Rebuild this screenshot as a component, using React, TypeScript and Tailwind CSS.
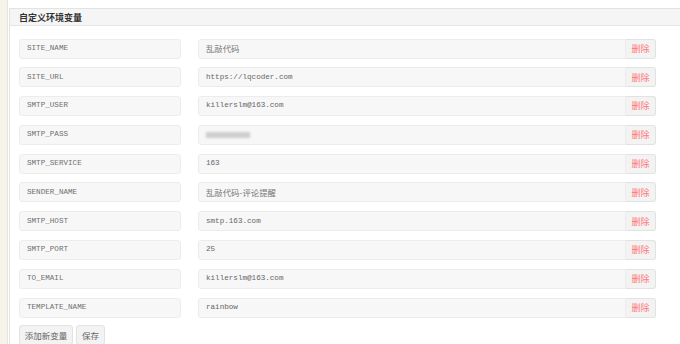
import React from "react";

const rows: [string, string][] = [
  ["SITE_NAME", "乱敲代码"],
  ["SITE_URL", "https://lqcoder.com"],
  ["SMTP_USER", "killerslm@163.com"],
  ["SMTP_PASS", ""],
  ["SMTP_SERVICE", "163"],
  ["SENDER_NAME", "乱敲代码-评论提醒"],
  ["SMTP_HOST", "smtp.163.com"],
  ["SMTP_PORT", "25"],
  ["TO_EMAIL", "killerslm@163.com"],
  ["TEMPLATE_NAME", "rainbow"],
];

const mono = { fontFamily: '"Liberation Mono", "DejaVu Sans Mono", "Noto Sans CJK SC", monospace' };

export default function App() {
  return (
    <div className="flex w-[680px] h-[344px] overflow-hidden bg-white" style={{ fontFamily: '"Noto Sans CJK SC", "Noto Sans", sans-serif' }}>
      <div className="w-[8px] shrink-0 bg-[#f6f4ea] border-r border-[#e9e6d6]" />
      <div className="ml-[1px] mt-[8px] flex-1 border-l border-t border-[#e3e3e3] flex flex-col">
        <div className="h-[22px] bg-[#f5f5f5] border-b border-[#e6e6e6] flex items-center pl-[9px] pt-[2px] text-[9px] font-bold text-[#333]">
          自定义环境变量
        </div>
        <div className="pl-[9px] pt-[13px] flex flex-col gap-[8.8px]">
          {rows.map(([k, v]) => (
            <div key={k} className="flex items-center h-[20px]">
              <div className="w-[162px] h-[20px] rounded-[3px] bg-[#f7f7f7] border border-[#ececec] flex items-center pl-[7px] text-[7.6px] text-[#707070]" style={mono}>
                {k}
              </div>
              <div className="ml-[17px] w-[428px] h-[20px] rounded-l-[3px] bg-[#f7f7f7] border border-[#ececec] flex items-center pl-[7px] text-[7.6px] text-[#666]" style={mono}>
                {k === "SMTP_PASS" ? (
                  <div className="w-[44px] h-[6px] bg-[#cfcfcf] blur-[1px]" />
                ) : /[\u4e00-\u9fff]/.test(v) ? (
                  <span className="text-[8.4px] text-[#777]" style={{ fontFamily: '"Noto Sans CJK SC", sans-serif' }}>{v}</span>
                ) : (
                  v
                )}
              </div>
              <div className="w-[30px] h-[20px] rounded-r-[3px] bg-[#f3f3f3] border border-l-0 border-[#e2e2e2] flex items-center justify-center text-[9px] text-[#f77]">
                删除
              </div>
            </div>
          ))}
          <div className="flex gap-[3px] -mt-[1px]">
            <div className="w-[54px] h-[20px] rounded-[3px] bg-[#f3f3f3] border border-[#e2e2e2] flex items-center justify-center text-[8.5px] text-[#666]">
              添加新变量
            </div>
            <div className="w-[29px] h-[20px] rounded-[3px] bg-[#f3f3f3] border border-[#e2e2e2] flex items-center justify-center text-[8.5px] text-[#666]">
              保存
            </div>
          </div>
        </div>
      </div>
    </div>
  );
}
